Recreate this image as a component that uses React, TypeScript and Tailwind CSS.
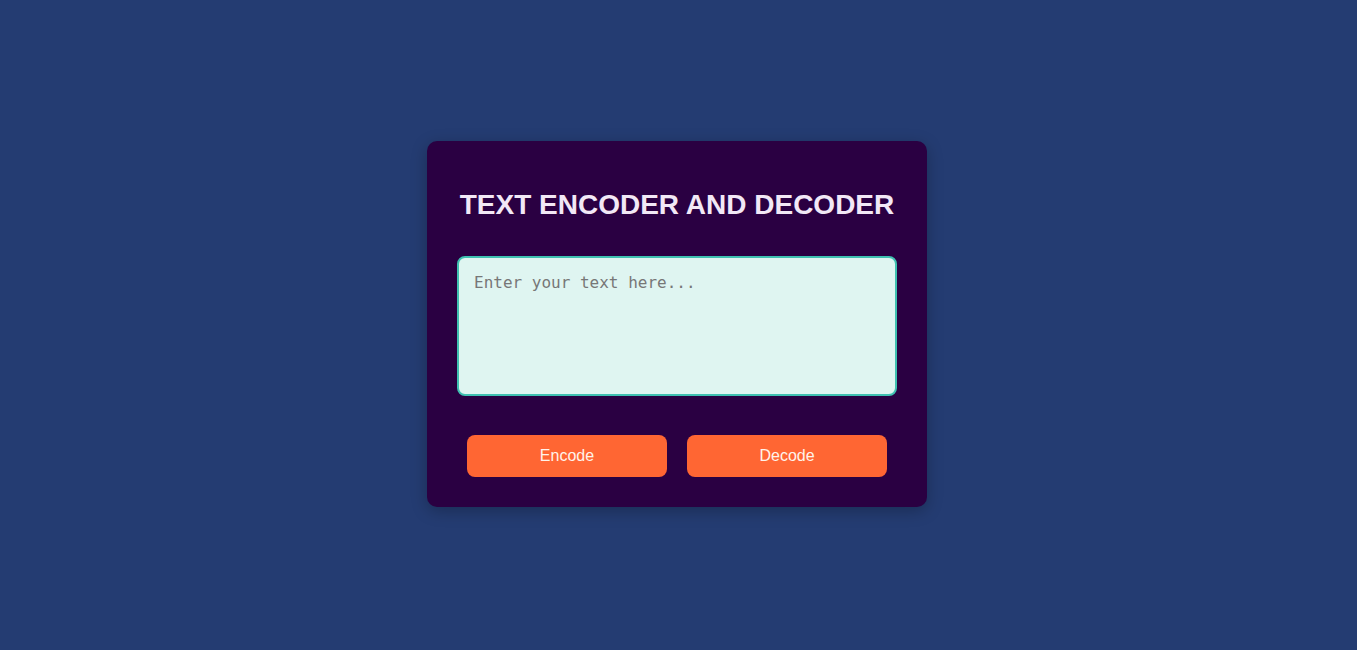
import React, { useState } from 'react';

export default function App() {
  const [text, setText] = useState('');

  const encode = () => {
    try {
      setText(btoa(unescape(encodeURIComponent(text))));
    } catch {
      // ignore
    }
  };

  const decode = () => {
    try {
      setText(decodeURIComponent(escape(atob(text))));
    } catch {
      // ignore
    }
  };

  return (
    <div className="min-h-screen w-full bg-[#243c72] flex items-center justify-center font-['Liberation_Sans',Arial,sans-serif]">
      <div className="w-[500px] bg-[#2a0042] rounded-[10px] p-[30px] shadow-[0_4px_16px_rgba(0,0,0,0.25)] -mt-[2px] mr-[3px]">
        <h1 className="text-center text-[28px] leading-8 font-bold text-[#f2e8f6] mt-[18px] mb-[35px]">
          TEXT ENCODER AND DECODER
        </h1>
        <textarea
          value={text}
          onChange={(e) => setText(e.target.value)}
          placeholder="Enter your text here..."
          className="block w-full h-[140px] resize-none rounded-[8px] border-2 border-[#3fc1b1] bg-[#dff5f1] p-[15px] text-[16px] leading-[19px] text-[#222] placeholder:text-[#777] outline-none font-['DejaVu_Sans_Mono',monospace]"
        />
        <div className="mt-[39px] flex justify-center gap-5">
          <button
            onClick={encode}
            className="w-[200px] h-[42px] rounded-[8px] bg-[#ff6633] text-[16px] text-[#fff3ea] cursor-pointer"
          >
            Encode
          </button>
          <button
            onClick={decode}
            className="w-[200px] h-[42px] rounded-[8px] bg-[#ff6633] text-[16px] text-[#fff3ea] cursor-pointer"
          >
            Decode
          </button>
        </div>
      </div>
    </div>
  );
}
